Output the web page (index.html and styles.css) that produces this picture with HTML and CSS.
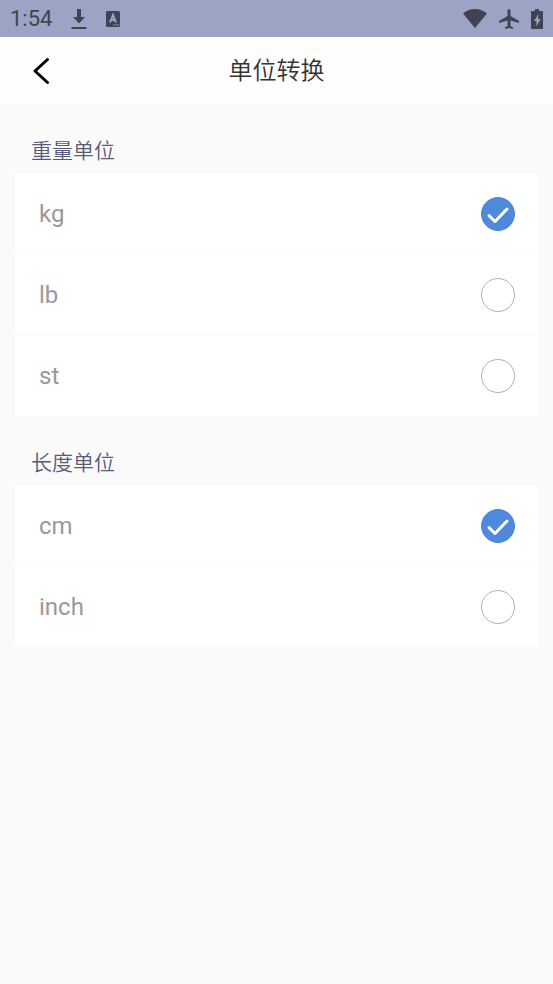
FILE: index.html
```html
<!DOCTYPE html>
<html lang="zh-CN">
<head>
<meta charset="utf-8">
<meta name="viewport" content="width=device-width, initial-scale=1">
<title>单位转换</title>
<link rel="stylesheet" href="styles.css">
</head>
<body>
<div class="status-bar">
  <div class="status-group status-left">
    <span class="clock">1:54</span>
    <svg width="16" height="22" viewBox="0 0 16 22" fill="currentColor" aria-hidden="true"><path d="M6 1h4v8h4l-6 6.500L2 9h4zM0.500 19h15v2h-15z"/></svg>
    <svg width="14" height="16" viewBox="0 0 14 16" aria-hidden="true"><rect width="14" height="16" rx="1.500" fill="currentColor"/><path d="M4 11.500L7 4l3 7.500M5 9h4" fill="none" stroke="#9ba4c4" stroke-width="2"/><path d="M7.500 13.300h1.200v1.200H7.500zM9.700 13.300h1.200v1.200H9.700zM11.800 13.300h1.200v1.200h-1.200z" fill="#9ba4c4"/></svg>
  </div>
  <div class="status-group status-right">
    <svg width="24" height="19" viewBox="0 0 24 19" fill="currentColor" aria-hidden="true"><path d="M0 4.500C3 1.800 7 0 12 0s9 1.800 12 4.500L12 19z"/></svg>
    <svg width="20" height="20" viewBox="2 2 20 20" fill="currentColor" aria-hidden="true"><path d="M22 16v-2l-8.500-5V3.500a1.500 1.500 0 0 0-3 0V9L2 14v2l8.500-2.500V19L8 20.500V22l4-1 4 1v-1.500L13.500 19v-5.500z"/></svg>
    <svg width="12" height="20" viewBox="0 0 12 20" aria-hidden="true"><path d="M1.300 2H4V0h4v2h2.700C11.500 2 12 2.500 12 3.300v15.400c0 .8-.5 1.300-1.300 1.300H1.300C.5 20 0 19.500 0 18.700V3.300C0 2.500.5 2 1.300 2z" fill="currentColor"/><path d="M7.500 5L3 12h2.500v5.500L9.500 10H7z" fill="#9ba4c4"/></svg>
  </div>
</div>
<header class="app-bar">
  <button class="back" type="button" aria-label="返回">
    <svg width="18" height="28" viewBox="0 0 18 28" fill="none" stroke="#000" stroke-width="3" stroke-linecap="round" stroke-linejoin="round" aria-hidden="true"><path d="M15.500 2.500L3 14l12.500 11.500"/></svg>
  </button>
  <h1 class="title">单位转换</h1>
</header>
<main class="content">
  <fieldset class="group">
    <legend class="group-title">重量单位</legend>
    <div class="card">
      <label class="row"><span>kg</span><span class="choice"><input type="radio" name="weight" checked><svg class="tick" viewBox="0 0 34 34" aria-hidden="true"><path d="M8 18.500l6 6L26 12"/></svg></span></label>
      <label class="row"><span>lb</span><span class="choice"><input type="radio" name="weight"><svg class="tick" viewBox="0 0 34 34" aria-hidden="true"><path d="M8 18.500l6 6L26 12"/></svg></span></label>
      <label class="row"><span>st</span><span class="choice"><input type="radio" name="weight"><svg class="tick" viewBox="0 0 34 34" aria-hidden="true"><path d="M8 18.500l6 6L26 12"/></svg></span></label>
    </div>
  </fieldset>
  <fieldset class="group">
    <legend class="group-title">长度单位</legend>
    <div class="card">
      <label class="row"><span>cm</span><span class="choice"><input type="radio" name="length" checked><svg class="tick" viewBox="0 0 34 34" aria-hidden="true"><path d="M8 18.500l6 6L26 12"/></svg></span></label>
      <label class="row"><span>inch</span><span class="choice"><input type="radio" name="length"><svg class="tick" viewBox="0 0 34 34" aria-hidden="true"><path d="M8 18.500l6 6L26 12"/></svg></span></label>
    </div>
  </fieldset>
</main>
</body>
</html>
```
FILE: styles.css
```css
* {
  box-sizing: border-box;
}

body {
  margin: 0;
  background: #fafafa;
  font-family: Roboto, "Noto Sans CJK SC", sans-serif;
}

svg {
  display: block;
}

.status-bar {
  display: flex;
  align-items: center;
  justify-content: space-between;
  height: 37px;
  padding: 0 10px;
  background: #9ba4c4;
  color: #404452;
}

.status-group {
  display: flex;
  align-items: center;
}

.status-left {
  gap: 19px;
}

.status-right {
  gap: 12px;
}

.clock {
  font-size: 22px;
  line-height: 26px;
}

.app-bar {
  display: grid;
  grid-template-columns: 64px 1fr 64px;
  align-items: center;
  height: 67px;
  background: #fefefe;
}

.back {
  display: flex;
  align-items: center;
  justify-content: flex-end;
  height: 48px;
  padding: 0 14px 0 0;
  border: 0;
  background: none;
}

.title {
  margin: 0;
  color: #333;
  font-size: 24px;
  font-weight: 350;
  line-height: 36px;
  text-align: center;
}

.content {
  padding: 0 15px;
}

.group {
  min-width: 0;
  margin: 0;
  padding: 0;
  border: 0;
}

.group-title {
  padding: 31px 16px 7px;
  color: #5a5a78;
  font-size: 21px;
  font-weight: 350;
  line-height: 32px;
}

.card {
  display: grid;
  gap: 1px;
}

.row {
  display: flex;
  align-items: center;
  justify-content: space-between;
  height: 80px;
  padding: 0 23px 0 24px;
  background: #fff;
  color: #999;
  font-size: 24px;
}

.choice {
  display: grid;
}

.choice > * {
  grid-area: 1 / 1;
  width: 34px;
  height: 34px;
}

.choice input {
  appearance: none;
  margin: 0;
  border: 1px solid #b0b0b0;
  border-radius: 50%;
}

.choice input:checked {
  border-color: #4e89db;
  background: #4e89db;
}

.tick {
  visibility: hidden;
  pointer-events: none;
  fill: none;
  stroke: #fff;
  stroke-width: 3;
  stroke-linecap: round;
  stroke-linejoin: round;
}

.choice input:checked + .tick {
  visibility: visible;
}
```
